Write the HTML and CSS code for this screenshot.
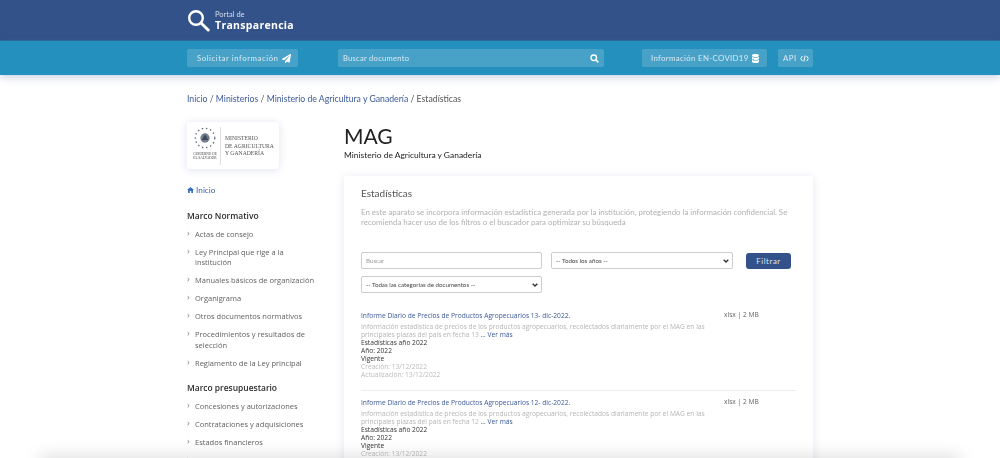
FILE: index.html
```html
<!DOCTYPE html>
<html lang="es">
<head>
<meta charset="utf-8">
<title>Portal de Transparencia - MAG Estadísticas</title>
<link rel="stylesheet" href="styles.css">
</head>
<body>
<header class="brand-bar">
  <div class="wrap brand">
    <svg class="brand-icon" width="23" height="23" viewBox="0 0 23 23" fill="none" stroke="#fff"><circle cx="9" cy="9" r="6.8" stroke-width="2.4"/><path d="M14 14l7.2 7" stroke-width="3" stroke-linecap="round"/></svg>
    <div class="brand-text"><span class="brand-small">Portal de</span><span class="brand-big">Transparencia</span></div>
  </div>
</header>
<nav class="tool-bar">
  <div class="wrap tools">
    <a class="tool tool-request">Solicitar información
      <svg width="9" height="9" viewBox="0 0 512 512" fill="#fff"><path d="M476 3L12 271c-18 10-16 36 3 44l106 44 287-253c5-5 12 2 8 8L175 406v88c0 23 28 33 43 15l63-77 124 52c14 6 31-3 33-18L512 28c3-20-18-35-36-25z"/></svg>
    </a>
    <div class="tool tool-search"><span>Buscar documento</span>
      <svg width="9" height="9" viewBox="0 0 10 10" fill="none" stroke="#fff"><circle cx="4.2" cy="4.2" r="3.1" stroke-width="1.5"/><path d="M6.6 6.6l2.7 2.7" stroke-width="1.7"/></svg>
    </div>
    <a class="tool tool-covid">Información EN-COVID19
      <svg width="7" height="9" viewBox="0 0 7 9" fill="#fff"><path d="M0 1.2C0 .4 1.6 0 3.5 0S7 .4 7 1.2v.6C7 2.6 5.4 3 3.5 3S0 2.6 0 1.800zM0 3c.8.5 2.100.7 3.500.7S6.200 3.500 7 3v1.700C7 5.500 5.400 5.900 3.500 5.900S0 5.500 0 4.700zM0 5.900c.8.5 2.100.7 3.500.7S6.200 6.400 7 5.900v1.800C7 8.500 5.400 9 3.500 9S0 8.500 0 7.700z"/></svg>
    </a>
    <a class="tool tool-api">API
      <svg width="9" height="7" viewBox="0 0 9 7" fill="none" stroke="#fff" stroke-width="1"><path d="M2.400 1L.7 3.500 2.400 6M6.600 1l1.700 2.500L6.600 6M5.200.5L3.800 6.500"/></svg>
    </a>
  </div>
</nav>
<main class="wrap page">
  <p class="crumbs"><a>Inicio</a> / <a>Ministerios</a> / <a>Ministerio de Agricultura y Ganadería</a> / Estadísticas</p>
  <div class="columns">
    <aside class="side">
      <div class="logo-card">
        <div class="seal">
          <svg width="22" height="22" viewBox="0 0 26 26"><circle cx="13" cy="13" r="11.500" fill="none" stroke="#5a6470" stroke-width="1.600" stroke-dasharray="1.600 3.400"/><circle cx="13" cy="13" r="5.500" fill="#76808c"/><path d="M13 8.500l4 7h-8z" fill="#3c4a5c"/></svg>
          <span>GOBIERNO DE<br>EL SALVADOR</span>
        </div>
        <div class="logo-name">MINISTERIO<br>DE AGRICULTURA<br>Y GANADERÍA</div>
      </div>
      <a class="home"><svg width="7" height="6" viewBox="0 0 14 12" fill="#3b6fc0"><path d="M7 0L0 6h2v6h3.500V8h3v4H12V6h2z"/></svg> Inicio</a>
      <h3 class="side-title first">Marco Normativo</h3>
      <ul class="side-list">
        <li>Actas de consejo</li>
        <li>Ley Principal que rige a la institución</li>
        <li>Manuales básicos de organización</li>
        <li>Organigrama</li>
        <li>Otros documentos normativos</li>
        <li>Procedimientos y resultados de selección</li>
        <li>Reglamento de la Ley principal</li>
      </ul>
      <h3 class="side-title">Marco presupuestario</h3>
      <ul class="side-list">
        <li>Concesiones y autorizaciones</li>
        <li>Contrataciones y adquisiciones</li>
        <li>Estados financieros</li>
        <li>Presupuesto</li>
      </ul>
    </aside>
    <section class="content">
      <h1 class="org">MAG</h1>
      <p class="org-full">Ministerio de Agricultura y Ganadería</p>
      <div class="card">
        <h2 class="card-title">Estadísticas</h2>
        <p class="card-intro">En este aparato se incorpora información estadística generada por la institución, protegiendo la información confidencial. Se recomienda hacer uso de los filtros o el buscador para optimizar su búsqueda</p>
        <form class="filters">
          <input class="field" type="text" placeholder="Buscar">
          <select class="field pick"><option>-- Todos los años --</option></select>
          <button class="filter-btn" type="button">Filtrar</button>
          <select class="field pick"><option>-- Todas las categorías de documentos --</option></select>
        </form>
        <article class="doc">
          <div class="doc-main">
            <a class="doc-title">Informe Diario de Precios de Productos Agropecuarios 13- dic-2022.</a>
            <p class="doc-desc">Información estadística de precios de los productos agropecuarios, recolectados diariamente por el MAG en las principales plazas del país en fecha 13 <a>... Ver más</a></p>
            <p class="doc-meta">Estadísticas año 2022</p>
            <p class="doc-meta">Año: 2022</p>
            <p class="doc-meta">Vigente</p>
            <p class="doc-date">Creación: 13/12/2022</p>
            <p class="doc-date">Actualización: 13/12/2022</p>
          </div>
          <div class="doc-size">xlsx | 2 MB</div>
        </article>
        <article class="doc">
          <div class="doc-main">
            <a class="doc-title">Informe Diario de Precios de Productos Agropecuarios 12- dic-2022.</a>
            <p class="doc-desc">Información estadística de precios de los productos agropecuarios, recolectados diariamente por el MAG en las principales plazas del país en fecha 12 <a>... Ver más</a></p>
            <p class="doc-meta">Estadísticas año 2022</p>
            <p class="doc-meta">Año: 2022</p>
            <p class="doc-meta">Vigente</p>
            <p class="doc-date">Creación: 13/12/2022</p>
            <p class="doc-date">Actualización: 13/12/2022</p>
          </div>
          <div class="doc-size">xlsx | 2 MB</div>
        </article>
      </div>
    </section>
  </div>
</main>
<div class="bottom-fade"></div>
</body>
</html>
```
FILE: styles.css
```css
* { box-sizing: border-box; }
html, body { margin: 0; height: 458px; overflow: hidden; }
body { background: #fff; font-family: "Open Sans", sans-serif; color: #555; }
p, h1, h2, h3, ul { margin: 0; padding: 0; }
.wrap { width: 626px; margin: 0 auto; }
.brand, .tools, .page { filter: blur(.3px); }

.brand-bar { height: 41px; background: #33528a; border-bottom: 1px solid #2e6a9e; }
.brand { display: flex; align-items: center; gap: 5px; height: 40px; }
.brand-text { display: flex; flex-direction: column; color: #fff; }
.brand-small { font-size: 7.500px; line-height: 9px; color: #d5deeb; font-family: Lato, sans-serif; }
.brand-big { font-size: 10.500px; line-height: 12px; font-weight: 700; letter-spacing: .3px; }

.tool-bar { height: 34px; background: #2390bd; box-shadow: 0 2px 8px rgba(60, 80, 160, .28); position: relative; }
.tools { display: flex; align-items: center; height: 34px; font-family: Lato, sans-serif; }
.tool { display: flex; align-items: center; height: 18px; background: rgba(255, 255, 255, .17); border-radius: 2px; color: #d8eaf2; font-size: 7.800px; letter-spacing: .55px; white-space: nowrap; }
.tool-request { width: 111px; padding-left: 10px; gap: 3px; margin-right: 40px; }
.tool-search { width: 266px; padding: 0 5px; justify-content: space-between; margin-right: 38px; letter-spacing: .3px; font-size: 7.500px; }
.tool-covid { width: 125px; padding-left: 9px; gap: 3px; margin-right: 11px; letter-spacing: .35px; }
.tool-api { width: 35px; padding-left: 5px; gap: 3px; }

.page { padding-top: 16.500px; }
.crumbs { font-family: Lato, sans-serif; font-size: 8.700px; line-height: 14px; color: #555; }
.crumbs a, .doc-desc a, .doc-title { color: #3b5998; }
.columns { display: flex; margin-top: 16.500px; }
.side { width: 157px; flex: none; }
.logo-card { display: flex; width: 92px; height: 47px; background: #fff; border-radius: 3px; box-shadow: 0 1px 8px rgba(70, 90, 170, .16); padding: 5px 0 4px 4px; }
.seal { width: 28px; display: flex; flex-direction: column; align-items: center; gap: 3px; font-family: "Liberation Serif", serif; font-size: 3.500px; line-height: 4px; color: #444; text-align: center; }
.logo-name { margin-left: 1px; padding: 8px 0 0 4px; border-left: 1px solid #ddd; font-family: "Liberation Serif", serif; font-size: 5.700px; line-height: 7.500px; color: #555; white-space: nowrap; }
.home { display: block; margin-top: 15px; font-family: Lato, sans-serif; font-size: 8.200px; line-height: 12px; color: #3b5fa8; }
.side-title { font-size: 8.450px; line-height: 13px; font-weight: 600; color: #2b2b2b; margin-top: 13px; }
.side-title.first { margin-top: 13px; }
.side-list { list-style: none; margin-top: 7px; margin-bottom: 11px; }
.side-list li { position: relative; padding-left: 8px; font-size: 7.500px; line-height: 10.300px; color: #5f5f5f; margin-bottom: 7.700px; width: 133px; }
.side-list li::before { content: "›"; position: absolute; left: 0; top: -1px; color: #888; font-size: 9px; }

.content { width: 469px; padding-top: 1px; }
.org { font-family: Lato, sans-serif; font-weight: 400; font-size: 21px; line-height: 26px; color: #222; }
.org-full { font-family: Lato, sans-serif; font-size: 8.450px; line-height: 13px; color: #222; margin-top: -.500px; }
.card { margin-top: 14.500px; background: #fff; border-radius: 2px; box-shadow: 0 1px 10px rgba(70, 90, 170, .14); padding: 10px 17px; height: 300px; }
.card-title { font-family: Lato, sans-serif; font-weight: 400; font-size: 10px; line-height: 14px; color: #555; }
.card-intro { font-family: Lato, sans-serif; font-size: 7.900px; line-height: 9.500px; color: #b0b0b0; margin-top: 8px; }
.filters { display: grid; grid-template-columns: 181px 182px 45px; column-gap: 9px; row-gap: 7px; margin-top: 25px; align-items: center; }
.filter-btn { margin-left: 4px; width: 45px; height: 16px; border: 0; border-radius: 3px; background: #33528a; color: #dfe6f0; font-family: Lato, sans-serif; font-size: 7.800px; letter-spacing: .6px; padding: 0; }
.field { height: 17px; background: #fff; border: 1px solid #ccc; border-radius: 2px; font-family: Lato, sans-serif; font-size: 6.200px; color: #444; padding: 0 4px; outline: 0; }
.pick { appearance: none; background-image: url("data:image/svg+xml,%3Csvg xmlns='http://www.w3.org/2000/svg' width='6' height='4'%3E%3Cpath d='M.7.7l2.300 2.300L5.300.7' fill='none' stroke='%23333' stroke-width='1.400'/%3E%3C/svg%3E"); background-repeat: no-repeat; background-position: right 3px center; }
.field::placeholder { color: #999; }
.doc { display: flex; padding-bottom: 11px; border-bottom: 1px solid #eee; margin-top: 18px; font-size: 6.650px; line-height: 8px; }
.doc + .doc { margin-top: 7px; border-bottom: 0; }
.doc-main { width: 363px; }
.doc-title { display: block; line-height: 9px; }
.doc-desc { color: #b5b5b5; margin-top: 1px; padding-top: 2px; width: 350px; }
.doc-meta { color: #333; }
.doc-date { color: #bbb; }
.doc-size { color: #666; }

.bottom-fade { position: fixed; left: 40px; right: 40px; bottom: -10px; height: 10px; box-shadow: 0 0 18px rgba(0, 0, 0, .2); pointer-events: none; }
```
